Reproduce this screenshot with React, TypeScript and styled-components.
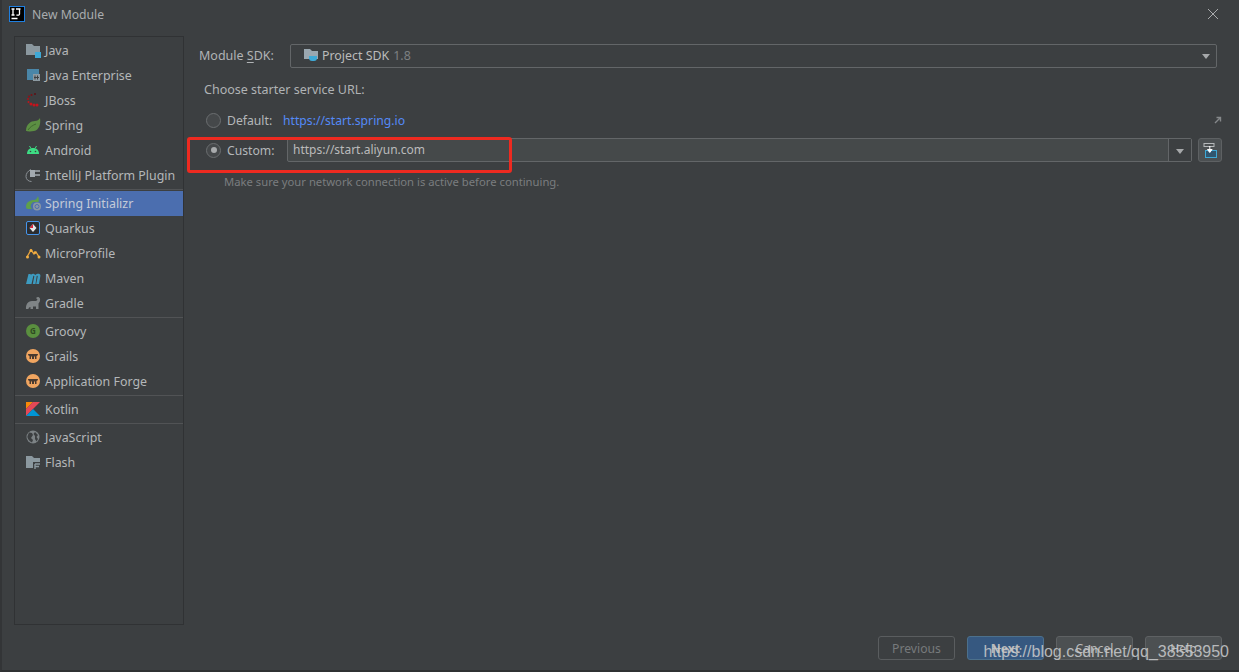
import React from 'react';
import styled, { createGlobalStyle } from 'styled-components';

const FONT = `"Noto Sans", "Open Sans", sans-serif`;

const Global = createGlobalStyle`
  html, body { margin: 0; padding: 0; background: #3c3f41; }
  body { font-family: ${FONT}; font-size: 12.2px; color: #bbbbbb; overflow: hidden; }
`;

const Dialog = styled.div`
  position: relative;
  width: 1239px;
  height: 672px;
  box-sizing: border-box;
  background: #3c3f41;
  border-left: 2px solid #333537;
  border-bottom: 2px solid #2f3133;
  display: flex;
  flex-direction: column;
  overflow: hidden;
`;
const TitleBar = styled.div`
  height: 28px;
  flex: none;
  display: flex;
  align-items: center;
  padding: 0 20px 0 7px;
  gap: 7px;
  color: #a9acae;
`;
const TitleText = styled.span`
  flex: 1;
`;
const Body = styled.div`
  flex: 1;
  min-height: 0;
  display: flex;
  padding: 8px 17px 0 12px;
  gap: 6px;
`;
const Sidebar = styled.aside`
  width: 170px;
  height: 589px;
  flex: none;
  box-sizing: border-box;
  border: 1px solid #303234;
  padding-top: 1px;
  background: #3c3f41;
`;
const Row = styled.div<{ $sel?: boolean }>`
  height: 25px;
  display: flex;
  align-items: center;
  gap: 5px;
  padding-left: 11px;
  white-space: nowrap;
  font-size: 12.4px;
  color: ${p => (p.$sel ? '#c4cbd8' : '#b4b7b9')};
  background: ${p => (p.$sel ? '#4b6eaf' : 'transparent')};
`;
const IconBox = styled.span`
  width: 14px;
  height: 14px;
  flex: none;
  display: flex;
  margin-bottom: 1px;
  svg { display: block; overflow: visible; }
`;
const Sep = styled.div`
  height: 2px;
  box-sizing: border-box;
  border-top: 1px solid #515355;
  margin-top: 1px;
`;
const Content = styled.main`
  flex: 1;
  min-width: 0;
  display: flex;
  flex-direction: column;
`;
const SdkRow = styled.div`
  display: flex;
  align-items: center;
  height: 24px;
  margin: 8px 5px 0 9px;
`;
const Label = styled.span`
  width: 91px;
  flex: none;
  padding-bottom: 2px;
  font-size: 12.5px;
  color: #b0b3b5;
  u { text-underline-offset: 2px; }
`;
const Combo = styled.div`
  flex: 1;
  height: 24px;
  box-sizing: border-box;
  border: 1px solid #636668;
  border-radius: 2px;
  display: flex;
  align-items: center;
  padding: 0 6px 2px 13px;
  gap: 2px;
  font-size: 12.4px;
`;
const Muted = styled.span`
  color: #7d8082;
  margin-left: 2px;
`;
const Spacer = styled.span`
  flex: 1;
`;
const Caret = styled.span`
  width: 0;
  height: 0;
  border-left: 4.5px solid transparent;
  border-right: 4.5px solid transparent;
  border-top: 5px solid #a6a8aa;
  flex: none;
  margin-top: 2px;
`;
const Heading = styled.div`
  margin: 12px 0 0 14px;
  height: 20px;
  line-height: 20px;
  font-size: 12.5px;
  color: #b0b3b5;
`;
const DefaultRow = styled.div`
  display: flex;
  align-items: center;
  height: 22px;
  margin: 9px 0 0 16px;
`;
const CustomRow = styled.div`
  display: flex;
  align-items: center;
  height: 24px;
  margin: 7px 0 0 16px;
`;
const Radio = styled.span<{ $on?: boolean }>`
  width: 15px;
  height: 15px;
  flex: none;
  box-sizing: border-box;
  border: 1px solid #6b6e70;
  border-radius: 50%;
  background: #45484a;
  display: flex;
  align-items: center;
  justify-content: center;
  margin-right: 6px;
  &::after {
    content: '';
    width: 6px;
    height: 6px;
    border-radius: 50%;
    background: ${p => (p.$on ? '#a9abad' : 'transparent')};
  }
`;
const UrlLabel = styled.span<{ $w: number }>`
  width: ${p => p.$w}px;
  flex: none;
  color: #b4b7b9;
`;
const Link = styled.span`
  color: #548af7;
`;
const Input = styled.div`
  flex: 1;
  height: 24px;
  box-sizing: border-box;
  background: #45494a;
  border: 1px solid #636668;
  border-radius: 2px;
  display: flex;
  align-items: center;
  color: #bbbbbb;
  padding-left: 5px;
`;
const InputText = styled.span`
  flex: 1;
  font-size: 12px;
  padding-bottom: 2px;
`;
const CaretCell = styled.span`
  width: 23px;
  height: 22px;
  flex: none;
  box-sizing: border-box;
  background: #3c3f41;
  border-left: 1px solid #636668;
  display: flex;
  align-items: center;
  justify-content: center;
`;
const IconButton = styled.div`
  width: 24px;
  height: 24px;
  flex: none;
  box-sizing: border-box;
  margin-left: 6px;
  border: 1px solid #5e6163;
  border-radius: 3px;
  background: #4c5052;
  display: flex;
  align-items: center;
  justify-content: center;
`;
const Hint = styled.div`
  margin: 12px 0 0 34px;
  height: 16px;
  line-height: 16px;
  font-size: 11.25px;
  color: #7a7d7f;
`;
const Footer = styled.footer`
  height: 46px;
  display: flex;
  justify-content: flex-end;
  gap: 12px;
  padding: 12px 15px 0 0;
  box-sizing: border-box;
  position: absolute;
  right: 2px;
  bottom: 0;
  width: 400px;
`;
const Btn = styled.div<{ $primary?: boolean; $off?: boolean }>`
  width: 77px;
  height: 24px;
  box-sizing: border-box;
  border-radius: 3px;
  border: 1px solid ${p => (p.$primary ? '#4c708c' : p.$off ? '#5a5d5f' : '#5e6163')};
  background: ${p => (p.$primary ? '#365880' : p.$off ? '#3c3f41' : '#4c5052')};
  color: ${p => (p.$off ? '#777a7c' : '#bbbbbb')};
  font-weight: ${p => (p.$primary ? 700 : 400)};
  display: flex;
  align-items: center;
  justify-content: center;
`;
const Watermark = styled.div`
  position: absolute;
  right: 10px;
  bottom: 8px;
  font-family: "Liberation Sans", Arial, sans-serif;
  font-size: 16px;
  line-height: 20px;
  color: #c6c8ca;
  opacity: 0.88;
  white-space: nowrap;
`;
const Highlight = styled.div`
  position: absolute;
  left: 185px;
  top: 137px;
  width: 325px;
  height: 36px;
  box-sizing: border-box;
  border: 3px solid #ee2a20;
  border-radius: 3px;
`;

const S = ({ children }: { children: React.ReactNode }) => (
  <IconBox><svg width="14" height="14" viewBox="0 0 14 14">{children}</svg></IconBox>
);

const icons: Record<string, React.ReactNode> = {
  java: <S><path d="M0 1h6l2 2h6v9H0z" fill="#8b989f" /><rect x="9" y="9" width="6" height="6" fill="#3fa9d6" /></S>,
  ee: <S><path d="M1 1h12v5H7v6H1z" fill="#4a86a8" /><rect x="7" y="6" width="7" height="7" fill="#8d9aa2" /><path d="M9 7.500v4M11.500 7.500v4M8 9.500h5" stroke="#3c3f41" /></S>,
  jboss: <S>{[[5, 11, '#c4131b'], [8, 12, '#c4131b'], [11, 12, '#c4131b'], [2.5, 9, '#c4131b'], [2, 6, '#a81218'], [3, 3.5, '#8f1116'], [5.5, 2, '#7a1014'], [9, 1, '#5c1114']].map(([x, y, c], i) => <circle key={i} cx={x as number} cy={y as number} r={i < 3 ? 1.5 : 1} fill={c as string} />)}</S>,
  spring: <S><path d="M0 13C0 6 5 3 9 3c2 0 4-1 5-3 1 6-1 12-6 13-3 .6-6 .5-7 0z" fill="#5c8f43" /><path d="M2 12c2-3 5-5 8-6" stroke="#3f6a2f" fill="none" /></S>,
  android: <S><path d="M1 11c0-4 2.500-6 6-6s6 2 6 6z" fill="#3ddc84" /><path d="M3.500 3l1.500 2.500M10.500 3L9 5.500" stroke="#3ddc84" /><circle cx="4.500" cy="8.500" r=".8" fill="#3c3f41" /><circle cx="9.500" cy="8.500" r=".8" fill="#3c3f41" /></S>,
  plugin: <S><path d="M5 1.500C1.500 3 0 6 0 8.500c0 3 2.500 5 5.500 5" fill="none" stroke="#8b9196" /><path d="M4 2h5v7H4z" fill="#a3aab0" /><path d="M9 3h5M9 7h5" stroke="#a3aab0" strokeWidth="1.400" /></S>,
  initializr: <S><path d="M0 11C0 6 4 4 8 4c2 0 3-1.500 4-4 1 3 1 5 .5 6H9a4 4 0 0 0-3 7H2c-1 0-2-1-2-2z" fill="#5fa04a" /><circle cx="11" cy="10.500" r="4" fill="#8b98a4" /><circle cx="11" cy="10.500" r="2" fill="none" stroke="#4b6eaf" /></S>,
  quarkus: <S><rect x=".5" y=".5" width="13" height="13" rx="1.500" fill="#2b2d30" stroke="#4695eb" /><path d="M7 3l3.500 4L7 11 3.500 7z" fill="#e5e8ea" /><path d="M3.500 7L7 3v4z" fill="#d7263d" /></S>,
  micro: <S><path d="M1 11l4-7 3 4 2-2 3 5" fill="none" stroke="#e8a33d" strokeWidth="1.300" /><circle cx="1.500" cy="11" r="1.500" fill="#f4b042" /><circle cx="5" cy="4.500" r="1.500" fill="#f4b042" /><circle cx="9" cy="6.500" r="1.300" fill="#f4b042" /><circle cx="13" cy="11" r="1.500" fill="#f4b042" /></S>,
  maven: <S><path d="M0 13L2.500 3h2.300l-.2 1C6 3 7 2.600 8 3c.6.200 1 .6 1.200 1 1.300-1 3-1.600 4.300-1 1 .500 1 1.500.8 2.500L13 13h-2.800l1.500-7.500c.1-.6-.4-.8-1-.6L9.500 13H6.800l1.500-7.500c.1-.6-.4-.8-1-.6L5.500 13z" fill="#3d9bc0" /></S>,
  gradle: <S><path d="M0 13c-.3-4 1.500-8 6-8h3c1 0 2-.3 2.500-1.500C10.500 3 10 2 10.500 1.500c1-1 3-.5 3.500 1 .5 2-.5 4-1.500 5V13H10v-2.500H7V13H4.500v-2C3 11 2.500 12 2.500 13z" fill="#7f8486" /></S>,
  groovy: <S><circle cx="7" cy="7" r="7" fill="#5a8f3f" /><text x="7" y="10" fontSize="8" fontWeight="700" textAnchor="middle" fill="#2f4a22" fontFamily="Noto Sans">G</text></S>,
  grails: <S><circle cx="7" cy="7" r="7" fill="#f0a560" /><path d="M2 5h10c0 1-.8 2-1.500 2v3H9V7.500H8V10H6V7.500H5V10H3.500V7C2.800 7 2 6 2 5z" fill="#4a3b30" /></S>,
  kotlin: <S><path d="M0 0h7L0 7z" fill="#f88909" /><path d="M7 0h7L0 14V7z" fill="#e44857" /><path d="M7 7l7 7H0z" fill="#0095d5" /></S>,
  js: <S><circle cx="7" cy="7" r="6.500" fill="#7d8386" /><path d="M3 2.500l3 .5 1 2-2 3 2 2-1 2.500C3 11 1 8 1.500 6zM9 2l3 3-1.500 2L12 9l-1.500 2.500L9 9V6L7.500 4z" fill="#3c3f41" /></S>,
  flash: <S><path d="M0 1h6l2 2h6v4H7v6H0z" fill="#8b989f" /><path d="M9 9h5M9 9v5M9 11.500h4" stroke="#8b989f" strokeWidth="1.400" fill="none" /></S>,
};

type Item = [string, string, boolean?];
const groups: Item[][] = [
  [['Java', 'java'], ['Java Enterprise', 'ee'], ['JBoss', 'jboss'], ['Spring', 'spring'], ['Android', 'android'], ['IntelliJ Platform Plugin', 'plugin']],
  [['Spring Initializr', 'initializr', true], ['Quarkus', 'quarkus'], ['MicroProfile', 'micro'], ['Maven', 'maven'], ['Gradle', 'gradle']],
  [['Groovy', 'groovy'], ['Grails', 'grails'], ['Application Forge', 'grails']],
  [['Kotlin', 'kotlin']],
  [['JavaScript', 'js'], ['Flash', 'flash']],
];

export default function App() {
  return (
    <Dialog>
      <Global />
      <TitleBar>
        <svg width="16" height="16" viewBox="0 0 16 16">
          <rect x=".5" y=".5" width="15" height="15" fill="#000" stroke="#1f7fe0" />
          <path d="M2.500 3h3M4 3v6M2.500 9h3M7 3h4.500M10.500 3v5c0 1-1 1.500-3 1" stroke="#fff" strokeWidth="1.300" fill="none" />
          <path d="M2.500 12.500h6" stroke="#fff" strokeWidth="1.500" />
        </svg>
        <TitleText>New Module</TitleText>
        <svg width="12" height="12" viewBox="0 0 12 12"><path d="M1 1l10 10M11 1L1 11" stroke="#a9abad" fill="none" /></svg>
      </TitleBar>
      <Body>
        <Sidebar>
          {groups.map((g, i) => (
            <React.Fragment key={i}>
              {i > 0 && <Sep />}
              {g.map(([name, icon, sel]) => (
                <Row key={name} $sel={sel}>
                  {icons[icon]}
                  <span>{name}</span>
                </Row>
              ))}
            </React.Fragment>
          ))}
        </Sidebar>
        <Content>
          <SdkRow>
            <Label>Module <u>S</u>DK:</Label>
            <Combo>
              <svg width="16" height="14" viewBox="0 0 16 14">
                <path d="M0 1h6l2 2h6v8H0z" fill="#9aa7b0" />
                <path d="M5 8h8v2a3 3 0 0 1-3 3H8a3 3 0 0 1-3-3z" fill="#3fa9d6" />
              </svg>
              <span>Project SDK</span>
              <Muted>1.8</Muted>
              <Spacer />
              <Caret />
            </Combo>
          </SdkRow>
          <Heading>Choose starter service URL:</Heading>
          <DefaultRow>
            <Radio />
            <UrlLabel $w={56}>Default:</UrlLabel>
            <Link>https://start.spring.io</Link>
            <Spacer />
            <svg width="8" height="8" viewBox="0 0 8 8"><path d="M1 7l5-5M2.500 1.500H6.500V5.500" stroke="#85888a" strokeWidth="1.400" fill="none" /></svg>
          </DefaultRow>
          <CustomRow>
            <Radio $on />
            <UrlLabel $w={60}>Custom:</UrlLabel>
            <Input>
              <InputText>https://start.aliyun.com</InputText>
              <CaretCell><Caret /></CaretCell>
            </Input>
            <IconButton>
              <svg width="14" height="15" viewBox="0 0 14 15">
                <rect x="1" y=".5" width="10" height="3" fill="none" stroke="#b5b8ba" />
                <rect x="2.500" y="7.500" width="11" height="7" fill="#30566f" stroke="#3fa9d6" />
                <path d="M6.800 3v5M4.500 6.500l2.300 3 2.300-3z" stroke="#fff" fill="#fff" />
              </svg>
            </IconButton>
          </CustomRow>
          <Hint>Make sure your network connection is active before continuing.</Hint>
        </Content>
      </Body>
      <Footer>
        <Btn $off>Previous</Btn>
        <Btn $primary>Next</Btn>
        <Btn>Cancel</Btn>
        <Btn>Help</Btn>
      </Footer>
      <Highlight />
      <Watermark>https://blog.csdn.net/qq_38553950</Watermark>
    </Dialog>
  );
}
